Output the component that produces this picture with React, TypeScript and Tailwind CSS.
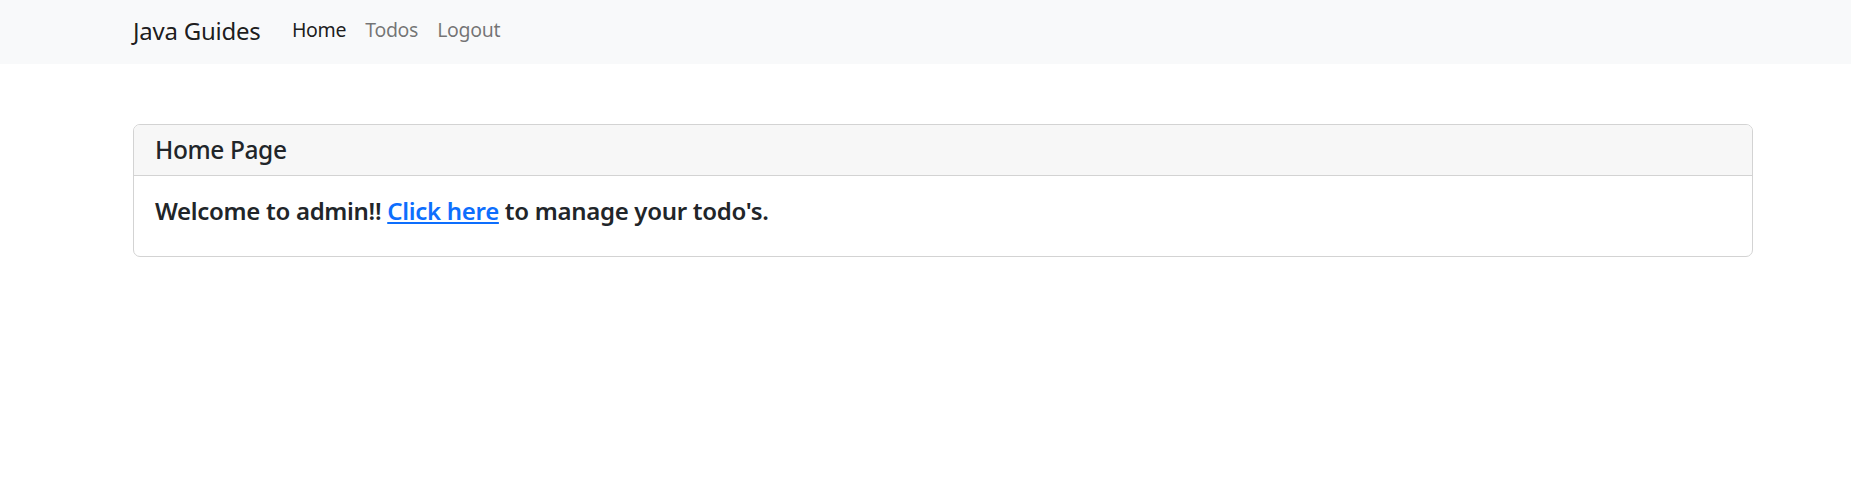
import React from "react";

export default function App() {
  return (
    <div className="min-h-[483px] w-full bg-white text-[#212529]" style={{ fontFamily: '"Noto Sans", "Open Sans", sans-serif' }}>
      <nav className="flex h-[64px] items-start bg-[#f8f9fa] pl-[133px]">
        <a href="#" className="mt-[16px] text-[24px] leading-[30px] tracking-[-0.25px] text-black/90 no-underline">
          Java Guides
        </a>
        <ul className="ml-[22px] mt-[17px] flex list-none text-[19.5px] leading-[26px] tracking-[-0.3px]">
          <li>
            <a href="#" className="block px-[9.5px] text-black/90">Home</a>
          </li>
          <li>
            <a href="#" className="block px-[9.5px] text-black/55">Todos</a>
          </li>
          <li>
            <a href="#" className="block px-[9.5px] text-black/55">Logout</a>
          </li>
        </ul>
      </nav>
      <main className="pl-[133px] pr-[98px] pt-[60px]">
        <div className="overflow-hidden rounded-[7px] border border-[#d3d3d3]">
          <div className="h-[51px] border-b border-[#d3d3d3] bg-[#f7f7f7] px-[21px] pt-[10px]">
            <h3 className="text-[24.5px] font-medium leading-[30px] tracking-[-0.4px]">Home Page</h3>
          </div>
          <div className="h-[80px] px-[21px] pt-[20px]">
            <h4 className="text-[24px] font-semibold leading-[30px] tracking-[-0.3px]">
              Welcome to admin!!{" "}
              <a href="#" className="text-[#0d6efd] underline">Click here</a> to manage your todo's.
            </h4>
          </div>
        </div>
      </main>
    </div>
  );
}
